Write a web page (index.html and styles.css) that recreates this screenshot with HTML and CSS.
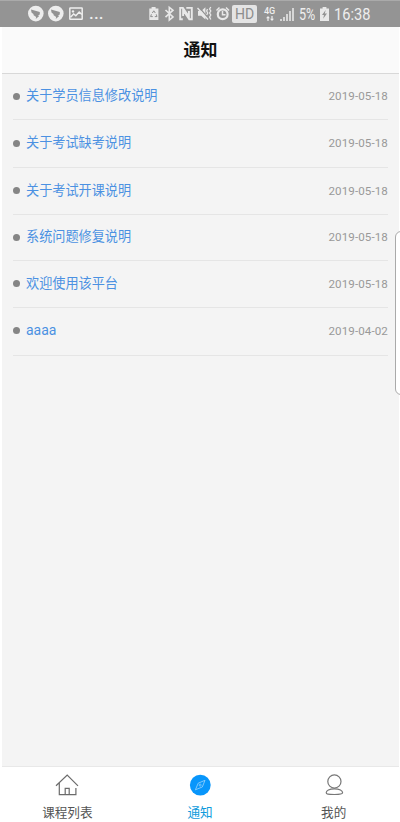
FILE: index.html
```html
<!DOCTYPE html>
<html lang="zh-CN">
<head>
<meta charset="utf-8">
<title>通知</title>
<link rel="stylesheet" href="styles.css">
</head>
<body>
<div class="app">
  <div class="status">
    <svg class="left-icons" width="55" height="20" viewBox="28 4 55 20">
      <g fill="#ededed"><circle cx="35.8" cy="13.6" r="7.8"/><circle cx="55.8" cy="13.6" r="7.8"/></g>
      <g fill="#929292"><path id="bird" d="M31 9.5 39.8 12 39.8 14.5 38.2 15.3 39 16.2 35.7 19 36.2 17 33 14.8 34 14.4 31.5 12.5Z"/><use href="#bird" x="20"/></g>
      <rect x="69.8" y="8" width="12.4" height="11.3" rx=".5" fill="none" stroke="#eee" stroke-width="1.5"/>
      <circle cx="73" cy="11.4" r="1.2" fill="#eee"/><path d="M70.5 17.2 73.6 14l2.2 1.7 3.4-3.7 2.7 2.5" fill="none" stroke="#eee" stroke-width="1.5"/>
    </svg>
    <span class="dots">...</span>
    <svg class="mid-icons" width="82" height="20" viewBox="148 4 82 20">
      <path d="M149.3 8.5h2.3V7h4v1.5h2.8V20h-9.1z" fill="#e8e8e8"/>
      <path d="m152.3 13 1.5-2.2 1.5 2.2M156.2 14.3l.8 2.3h-2.2M152.8 16.6h-2.2l.8-2.3" fill="none" stroke="#8f8f8f" stroke-width="1"/>
      <path d="m165.5 10 7.5 7-3.7 3V7.3l3.7 2.9-7.5 7" fill="none" stroke="#e8e8e8" stroke-width="1.6"/>
      <path d="M182.8 19.3h-2.6V7.9h2.7l6 9V11M186.3 7.9h5.5v11.4h-2.5l-6.2-9V16" fill="none" stroke="#e8e8e8" stroke-width="1.9"/>
      <path d="M198 11h3.2l4.2-3.7v12.2l-4.2-3.8H198z" fill="#e8e8e8"/><path d="m199.4 7.5 9 11" stroke="#929292" stroke-width="1.2"/><path d="m197.5 8 10.5 11.5" stroke="#e8e8e8" stroke-width="1.4"/>
      <path d="m207.5 9-.8 2 1 2-1 2M210.8 7l-1.2 2 1.2 2-1.2 2 1.2 2-1.2 2 1.2 2.5" fill="none" stroke="#e8e8e8" stroke-width="1.3"/>
      <circle cx="222.7" cy="14.2" r="4.9" fill="none" stroke="#e8e8e8" stroke-width="2.2"/><path d="M222.5 11v3.7h3M216.5 10.5l3-3M229 10.5l-3-3" fill="none" stroke="#e8e8e8" stroke-width="1.5"/>
    </svg>
    <span class="hd">HD</span>
    <span class="network"><span>4G</span><svg width="8" height="5" viewBox="0 0 8 5"><path d="M0 2.3 2 0l2 2.3H2.6V5H1.4V2.3ZM4 2.7 6 5l2-2.3H6.6V0H5.4v2.7Z" fill="#eee"/></svg></span>
    <svg class="signal" width="14" height="13" viewBox="0 0 14 13"><path d="M0 11h2v2H0zM3 9h2v4H3zM6 6h2v7H6zM9 3h2v10H9zM12 0h2v13h-2z" fill="#d6d6d6"/></svg>
    <span class="percent">5%</span>
    <svg class="battery" width="9" height="14" viewBox="0 0 9 14"><path d="M0 1.6h2.6V0h3.8v1.6H9V14H0z" fill="#e8e8e8"/><path d="M5.7 3 2 8h2l-.8 3.8L7 6.6H4.8z" fill="#929292"/></svg>
    <span class="clock">16:38</span>
  </div>
  <div class="page">
    <header class="title">通知</header>
    <main class="content">
      <ul class="notices">
        <li><i></i><a>关于学员信息修改说明</a><time>2019-05-18</time></li>
        <li><i></i><a>关于考试缺考说明</a><time>2019-05-18</time></li>
        <li><i></i><a>关于考试开课说明</a><time>2019-05-18</time></li>
        <li><i></i><a>系统问题修复说明</a><time>2019-05-18</time></li>
        <li><i></i><a>欢迎使用该平台</a><time>2019-05-18</time></li>
        <li><i></i><a class="latin">aaaa</a><time>2019-04-02</time></li>
      </ul>
    </main>
    <nav class="tabs">
      <div class="tab">
        <svg width="24" height="24" viewBox="0 0 24 24" fill="none" stroke="#6b6b6b" stroke-width="1.2"><path d="M1 12.8 12.2 2 23 12.8M4.3 10v11.6h16.6V15M10.2 21.5v-6.2h4v6.2"/></svg>
        <span>课程列表</span>
      </div>
      <div class="tab active">
        <svg width="24" height="24" viewBox="0 0 24 24"><circle cx="12.3" cy="12.1" r="10.4" fill="#0896fb"/><path d="M17 7.3 14.3 14 7.4 16.8 10.2 10.2Z" fill="none" stroke="#8ccdfb" stroke-width=".9"/><circle cx="12.2" cy="12.1" r="1" fill="none" stroke="#8ccdfb" stroke-width=".8"/></svg>
        <span>通知</span>
      </div>
      <div class="tab">
        <svg width="24" height="24" viewBox="0 0 24 24" fill="none" stroke="#777" stroke-width="1.2"><circle cx="12.4" cy="8.5" r="6.6"/><path d="M4.2 19.8c0-2 3-4 8.2-4s8.2 2 8.2 4c0 1.3-1.7 1.7-8.2 1.7s-8.2-.4-8.2-1.7Z"/></svg>
        <span>我的</span>
      </div>
    </nav>
  </div>
  <div class="edge-handle"></div>
</div>
</body>
</html>
```

FILE: styles.css
```css
* { box-sizing: border-box; }
body { margin: 0; background: #fff; font-family: Roboto, "Noto Sans CJK SC", sans-serif; }
.app { position: relative; width: 400px; height: 822px; overflow: hidden; display: flex; flex-direction: column; }
.status { height: 27px; flex: none; display: flex; align-items: center; padding: 0 0 0 28px; background: #949494; border-top: 1px solid #aaa; color: #eee; white-space: nowrap; }
.status svg { display: block; flex: none; }
.dots { width: 20px; margin-left: 6px; padding-bottom: 2px; font-size: 17px; font-weight: 500; line-height: 20px; letter-spacing: .2px; }
.mid-icons { margin-left: 39px; }
.hd { width: 25px; height: 18px; margin-left: 2px; border-radius: 2px; background: #e4e4e4; color: #8d8d8d; font: 14px/19px Roboto, sans-serif; text-align: center; }
.network { width: 13px; margin-left: 6px; display: flex; flex-direction: column; align-items: center; font: 500 9px/9px Roboto, sans-serif; }
.signal { margin-left: 4px; }
.percent, .clock { font-size: 17px; line-height: 24px; transform-origin: left center; }
.percent { width: 18px; margin-left: 5px; transform: scaleX(.74); }
.battery { margin-left: 3px; }
.clock { width: 36px; margin-left: 5px; transform: scaleX(.86); }
.page { flex: 1; min-height: 0; display: flex; flex-direction: column; padding: 0 1px 0 2px; }
.title { height: 47px; flex: none; background: #fafafa; border-bottom: 1px solid #d8d8d8; color: #111; font-size: 17px; font-weight: 700; line-height: 46px; text-align: center; }
.content { flex: 1; min-height: 0; background: #f4f4f4; padding: 0 11px; }
.notices { list-style: none; margin: 0; padding: 0; }
.notices li { height: 47px; display: flex; align-items: center; border-bottom: 1px solid #e5e5e5; padding-bottom: 1px; }
.notices li:first-child { height: 46px; padding-bottom: 1px; }
.notices li:nth-child(4) { height: 46px; padding-bottom: 1px; }
.notices li:nth-child(2) { height: 48px; }
.notices li:last-child { height: 48px; padding-bottom: 2px; }
.notices i { width: 7px; height: 7px; border-radius: 50%; background: #858585; margin: 0 6px 0 0; }
.notices a { flex: 1; color: #4b91e2; font-size: 13.15px; line-height: 20px; }
.notices .latin { font-size: 14px; padding-bottom: 2px; }
.notices time { color: #999; font-size: 11.6px; line-height: 20px; letter-spacing: .1px; }
.tabs { height: 56px; flex: none; display: flex; background: #fff; border-top: 1px solid #e8e8e8; }
.tab { flex: 1 1 0; min-width: 0; display: flex; flex-direction: column; align-items: center; padding-top: 6px; color: #555; font-size: 12.6px; line-height: 18px; }
.tab svg { display: block; margin-bottom: 7px; }
.tab:first-child { padding-right: 2px; }
.tab:nth-child(2) { padding-right: 2px; }
.tab:last-child { padding-left: 1px; }
.tab.active { color: #109bdc; }
.edge-handle { position: absolute; left: 395px; top: 231px; width: 12px; height: 164px; background: #fff; border: 1px solid #aaa; border-radius: 6px; }
```
